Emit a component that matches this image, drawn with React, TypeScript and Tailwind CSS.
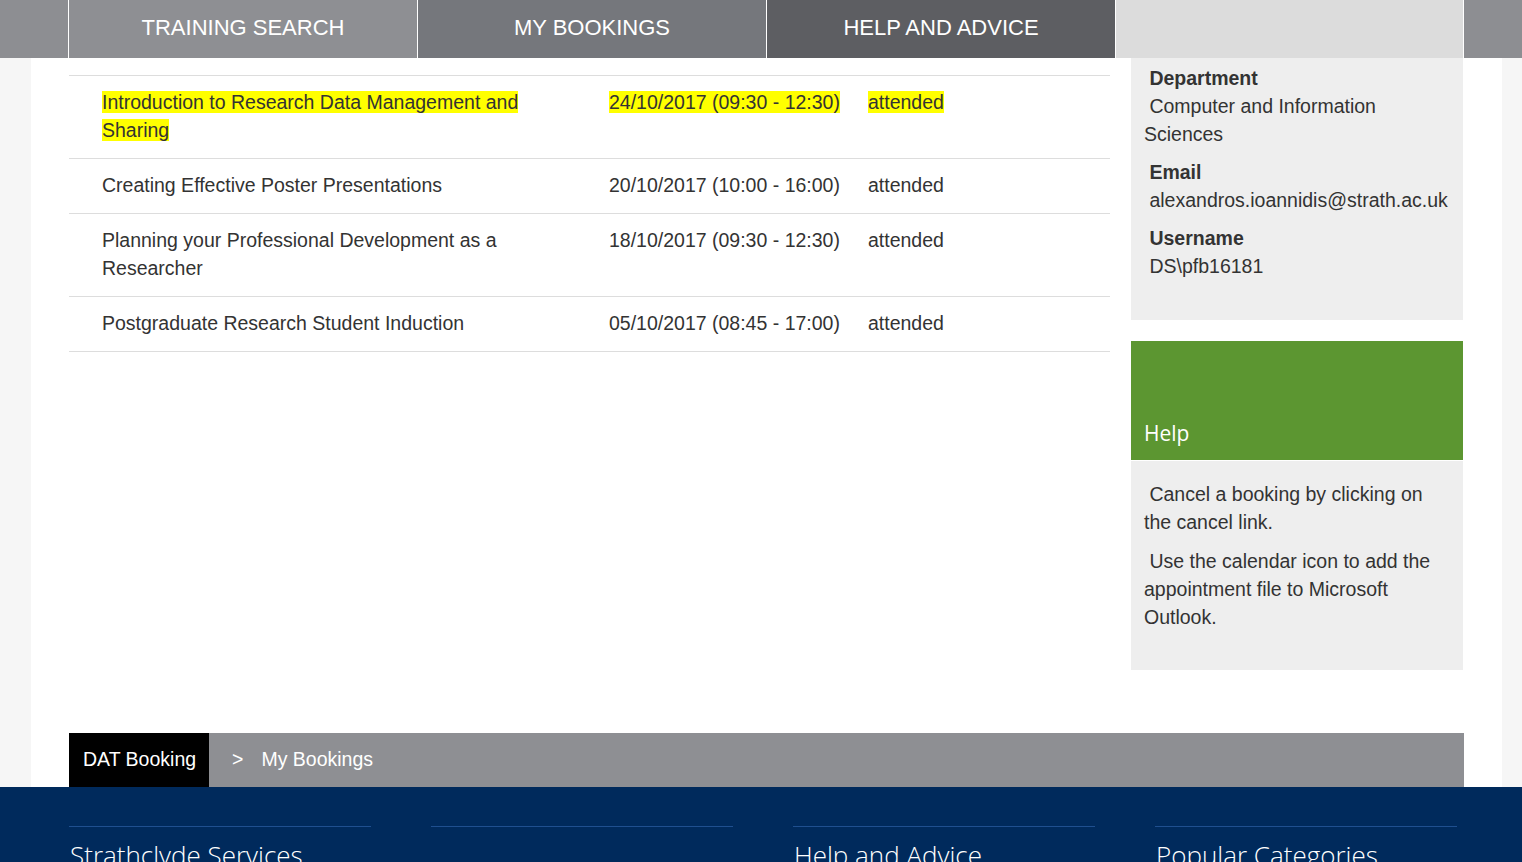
import React from 'react';

const bookings = [
  { title: 'Introduction to Research Data Management and Sharing', date: '24/10/2017 (09:30 - 12:30)', status: 'attended', marked: true },
  { title: 'Creating Effective Poster Presentations', date: '20/10/2017 (10:00 - 16:00)', status: 'attended' },
  { title: 'Planning your Professional Development as a Researcher', date: '18/10/2017 (09:30 - 12:30)', status: 'attended' },
  { title: 'Postgraduate Research Student Induction', date: '05/10/2017 (08:45 - 17:00)', status: 'attended' },
];

const tabs = [
  { label: 'TRAINING SEARCH', bg: 'bg-[#8e8f93]' },
  { label: 'MY BOOKINGS', bg: 'bg-[#75777c]' },
  { label: 'HELP AND ADVICE', bg: 'bg-[#5d5e62]' },
  { label: '', bg: 'bg-[#dcdcdc]' },
];

function Mark({ on, children }: { on?: boolean; children: React.ReactNode }) {
  return on ? <span className="bg-[#ffff00] text-[#333]">{children}</span> : <>{children}</>;
}

export default function App() {
  return (
    <div className="h-[862px] overflow-hidden bg-[#f6f6f6] font-['Liberation_Sans',Arial,sans-serif] text-[#333]">
      {/* NAV */}
      <nav className="h-[58px] bg-[#8d8e92] flex pl-[68px]">
        {tabs.map((t, i) => (
          <div
            key={i}
            className={`${t.bg} w-[349px] h-full border-l border-white flex items-center justify-center pb-[4px] text-white text-[22px] ${i === tabs.length - 1 ? 'border-r' : ''}`}
          >
            {t.label}
          </div>
        ))}
      </nav>

      {/* PAGE */}
      <div className="ml-[31px] mr-[20px] bg-white px-[38px]">
        <div className="flex gap-[21px] pb-[63px]">
          {/* BOOKINGS TABLE */}
          <section className="w-[1041px] shrink-0 pt-[17px]">
            <div className="border-t border-[#dddddd]">
              {bookings.map((b) => (
                <div key={b.title} className="flex border-b border-[#dddddd] pt-[12px] pb-[14px] text-[19.5px] leading-[28px]">
                  <div className="w-[474px] ml-[33px]">
                    <Mark on={b.marked}>{b.title}</Mark>
                  </div>
                  <div className="w-[259px] ml-[33px]">
                    <Mark on={b.marked}>{b.date}</Mark>
                  </div>
                  <div className="flex-1">
                    <Mark on={b.marked}>{b.status}</Mark>
                  </div>
                </div>
              ))}
            </div>
          </section>

          {/* SIDEBAR */}
          <aside className="w-[332px] shrink-0">
            <div className="bg-[#eeeeee] px-[13px] pt-[6px] pb-[40px] text-[19.5px] leading-[28px] flex flex-col gap-[10px]">
              <div>
                <div className="font-bold">{'\u00a0'}Department</div>
                <div>{'\u00a0'}Computer and Information Sciences</div>
              </div>
              <div>
                <div className="font-bold">{'\u00a0'}Email</div>
                <div className="whitespace-nowrap">{'\u00a0'}alexandros.ioannidis@strath.ac.uk</div>
              </div>
              <div>
                <div className="font-bold">{'\u00a0'}Username</div>
                <div>{'\u00a0'}DS\pfb16181</div>
              </div>
            </div>

            <div className="mt-[21px] h-[119px] bg-[#5c9631] flex items-end px-[13px] pb-[12px]">
              <h3 className="font-['Open_Sans',sans-serif] text-[21px] leading-[30px] text-white">Help</h3>
            </div>
            <div className="border-t border-white bg-[#eeeeee] px-[13px] pt-[19px] pb-[39px] text-[19.5px] leading-[28px] flex flex-col gap-[11px]">
              <p>{'\u00a0'}Cancel a booking by clicking on the cancel link.</p>
              <p>{'\u00a0'}Use the calendar icon to add the appointment file to Microsoft Outlook.</p>
            </div>
          </aside>
        </div>

        {/* BREADCRUMB */}
        <div className="h-[54px] bg-[#8e8f93] flex items-center text-white text-[19.5px] whitespace-nowrap">
          <div className="h-full w-[140px] shrink-0 bg-black flex items-center px-[14px]">DAT Booking</div>
          <span className="ml-[23px]">&gt;</span>
          <span className="ml-[18px]">My Bookings</span>
        </div>
      </div>

      {/* FOOTER */}
      <footer className="bg-[#002a5c] pt-[39px] h-[200px]">
        <div className="ml-[69px] grid grid-cols-[302px_302px_302px_302px] gap-x-[60px]">
          {['Strathclyde Services', '', 'Help and Advice', 'Popular Categories'].map((h, i) => (
            <div key={i} className="border-t border-[#1f4f8f] pt-[13px] pl-px">
              <h4 className="font-['Open_Sans',sans-serif] font-light text-[26px] leading-[30px] text-white min-h-[30px]">{h}</h4>
            </div>
          ))}
        </div>
      </footer>
    </div>
  );
}
